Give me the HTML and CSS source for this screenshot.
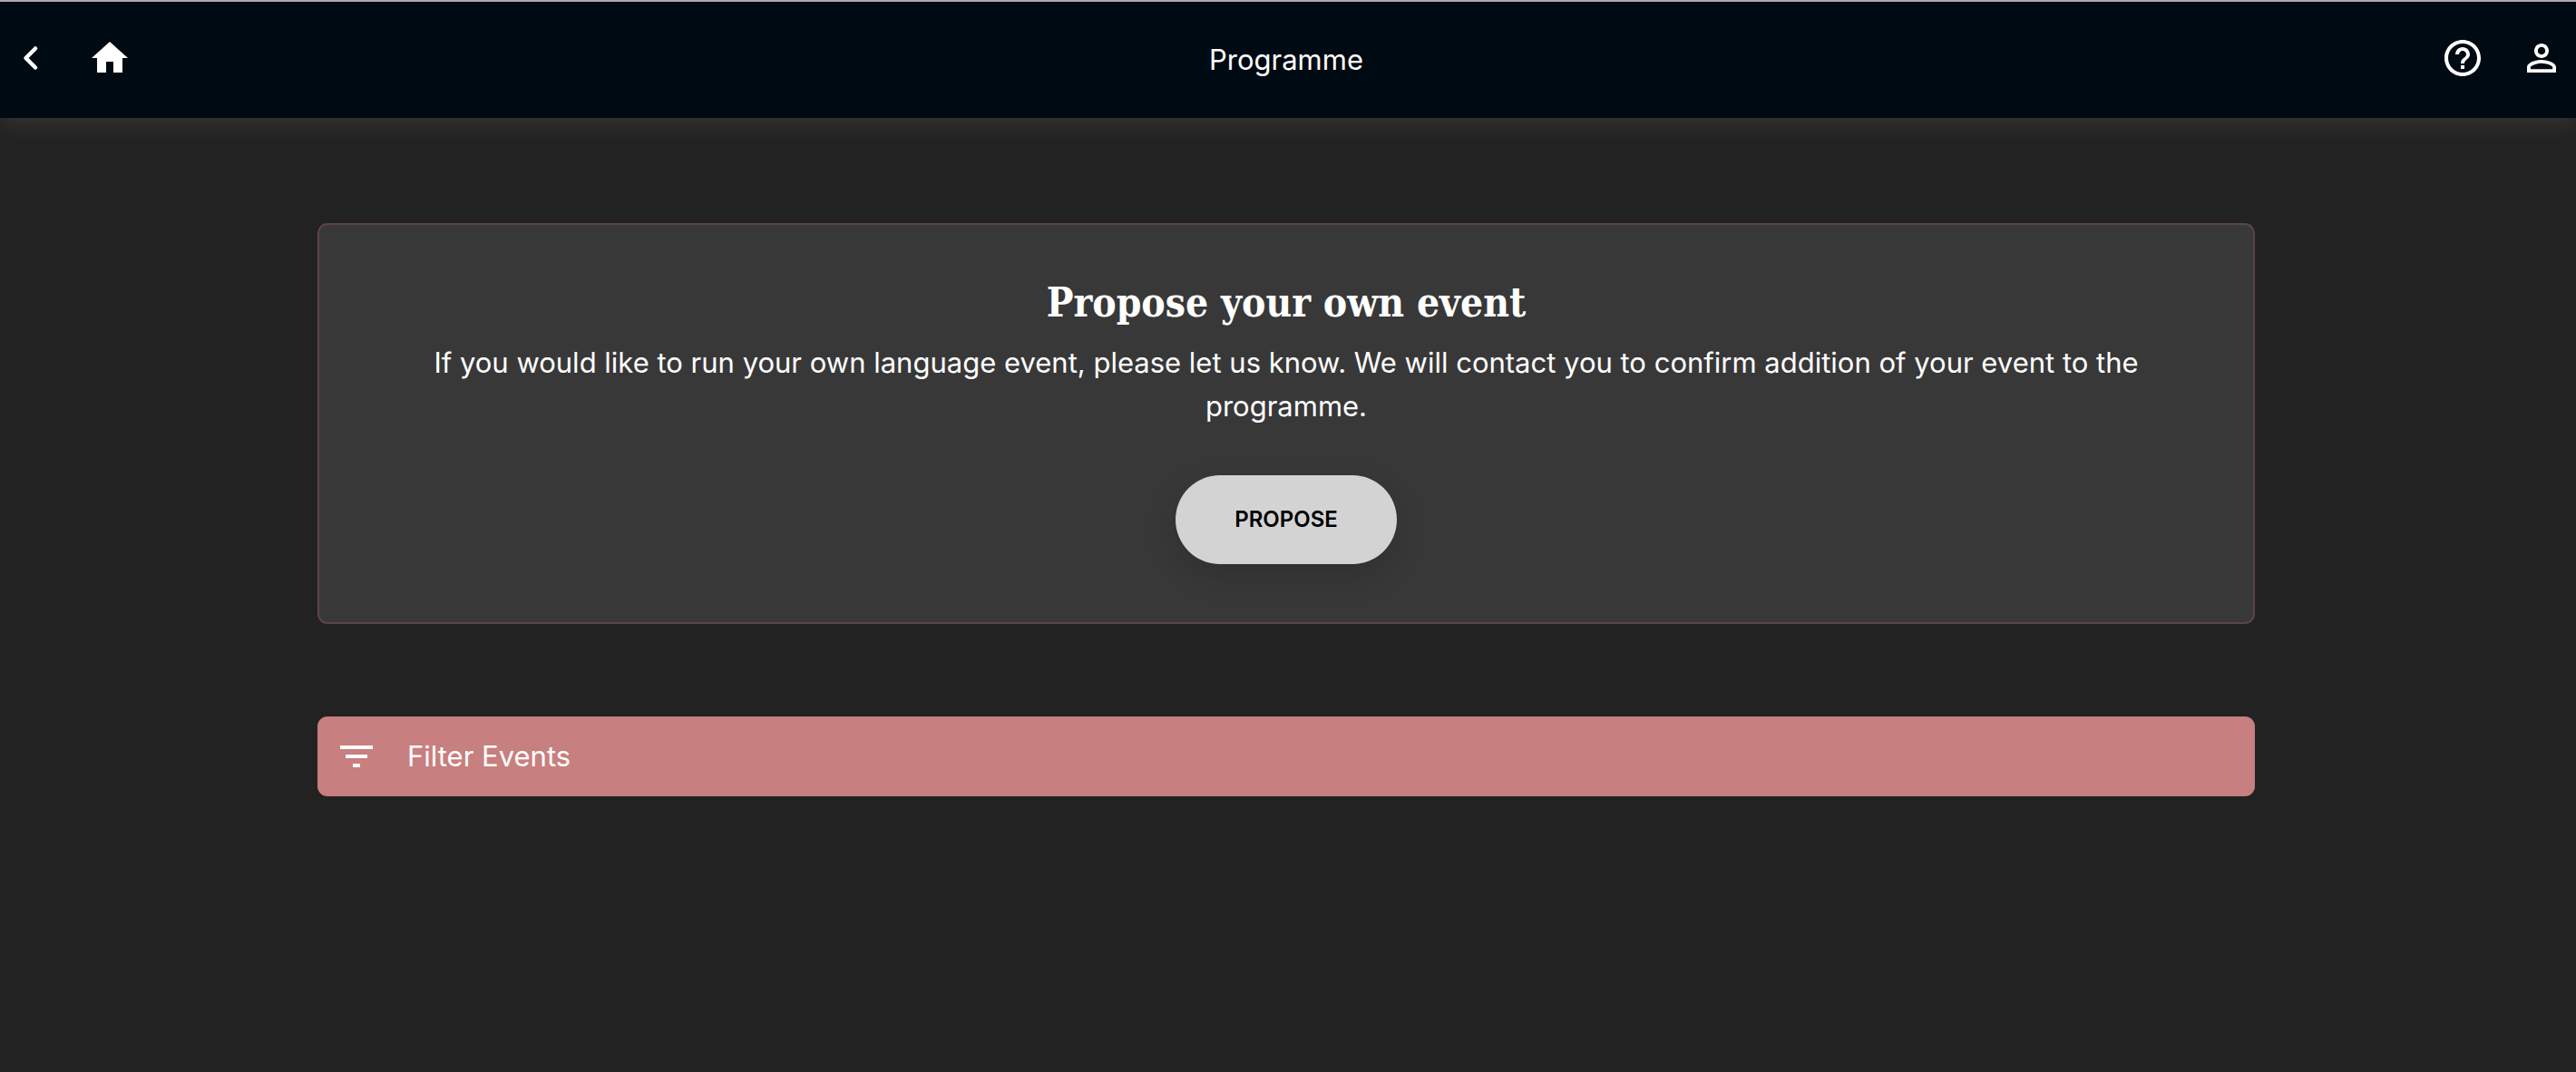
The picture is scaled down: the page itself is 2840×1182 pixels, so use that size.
FILE: index.html
```html
<!DOCTYPE html>
<html lang="en">
<head>
    <meta charset="utf-8">
    <meta name="viewport" content="width=device-width, initial-scale=1">
    <title>Programme</title>
    <link rel="stylesheet" href="styles.css">
</head>
<body>
    <!-- Top bar -->
    <header class="toolbar">
        <div class="toolbar-start">
            <button class="icon-button back-button" type="button" aria-label="Back">
                <svg class="icon icon-back" viewBox="0 0 24 48" aria-hidden="true">
                    <path d="M17 13.5 6.5 24 17 34.5" />
                </svg>
            </button>
            <a class="icon-button" href="#home" aria-label="Home">
                <svg class="icon" viewBox="0 0 24 24" aria-hidden="true">
                    <path d="M10 20v-6h4v6h5v-8h3L12 3 2 12h3v8z" />
                </svg>
            </a>
        </div>
        <h1 class="toolbar-title">Programme</h1>
        <div class="toolbar-end">
            <a class="icon-button" href="#help" aria-label="Help">
                <svg class="icon" viewBox="0 0 24 24" aria-hidden="true">
                    <path d="M11 18h2v-2h-2v2zm1-16C6.48 2 2 6.48 2 12s4.48 10 10 10 10-4.48 10-10S17.52 2 12 2zm0 18c-4.41 0-8-3.59-8-8s3.59-8 8-8 8 3.59 8 8-3.59 8-8 8zm0-14c-2.21 0-4 1.79-4 4h2c0-1.1.9-2 2-2s2 .9 2 2c0 2-3 1.75-3 5h2c0-2.25 3-2.5 3-5 0-2.21-1.79-4-4-4z" />
                </svg>
            </a>
            <a class="icon-button" href="#account" aria-label="Account">
                <svg class="icon" viewBox="0 0 24 24" aria-hidden="true">
                    <path d="M12 5.9c1.16 0 2.1.94 2.1 2.1s-.94 2.1-2.1 2.1S9.9 9.16 9.9 8s.94-2.1 2.1-2.1m0 9c2.97 0 6.1 1.46 6.1 2.1v1.1H5.9V17c0-.64 3.13-2.1 6.1-2.1M12 4C9.79 4 8 5.79 8 8s1.79 4 4 4 4-1.79 4-4-1.79-4-4-4zm0 9c-2.67 0-8 1.34-8 4v3h16v-3c0-2.66-5.33-4-8-4z" />
                </svg>
            </a>
        </div>
    </header>

    <main class="content">
        <section class="card">
            <h2 class="card-title">Propose your own event</h2>
            <p class="card-text">If you would like to run your own language event, please let us know. We will contact you to confirm addition of your event to the programme.</p>
            <button class="propose-button" type="button">PROPOSE</button>
        </section>

        <button class="filter-button" type="button">
            <svg class="icon" viewBox="0 0 24 24" aria-hidden="true">
                <path d="M10 18h4v-2h-4v2zM3 6v2h18V6H3zm3 7h12v-2H6v2z" />
            </svg>
            Filter Events
        </button>
    </main>
</body>
</html>
```

FILE: styles.css
```css
* {
    box-sizing: border-box;
}

body {
    margin: 0;
    min-height: 100vh;
    padding-right: 4px;
    background-color: #222;
    color: #fff;
    font-family: Inter, Roboto, sans-serif;
    font-size: 31px;
    line-height: 48px;
}

button {
    border: none;
    color: inherit;
    font: inherit;
    cursor: pointer;
}

/* Top bar */
.toolbar {
    display: grid;
    grid-template-columns: 1fr auto 1fr;
    align-items: center;
    height: 130px;
    margin-right: -4px;
    padding: 0 14px 0 10px;
    border-top: 2px solid #b3a3aa;
    background-color: #000a12;
    box-shadow: 0 4px 28px rgba(255, 255, 255, 0.1);
}

.toolbar-start,
.toolbar-end {
    display: flex;
    align-items: center;
}

.toolbar-start {
    gap: 51px;
    padding-left: 12px;
}

.toolbar-end {
    justify-content: flex-end;
    gap: 39px;
}

.toolbar-title {
    margin: 0;
    font-size: 31px;
    font-weight: 400;
}

.icon-button {
    display: flex;
    padding: 0 0 4px;
    background: none;
    color: #fff;
}

.icon {
    width: 48px;
    height: 48px;
    fill: currentColor;
}

.icon-back {
    width: 24px;
    fill: none;
    stroke: currentColor;
    stroke-width: 4.5;
    stroke-linecap: round;
    stroke-linejoin: round;
}

/* Page content */
.content {
    width: calc(75% + 9px);
    margin: 0 auto;
    padding: 116px 0;
}

.card {
    display: flex;
    flex-direction: column;
    align-items: center;
    margin-bottom: 102px;
    padding: 56px 120px 64px;
    border: 2px solid #5c434f;
    border-radius: 11px;
    background-color: #383838;
    text-align: center;
}

.card-title {
    margin: 0 0 12px;
    font-family: "DejaVu Serif Condensed", "DejaVu Serif", serif;
    font-size: 44px;
    font-weight: 700;
    line-height: 60px;
}

.card-text {
    margin: 0 0 52px;
}

.propose-button {
    height: 98px;
    padding: 0 65px;
    border-radius: 49px;
    background-color: #d3d3d3;
    color: #000;
    font-size: 24px;
    font-weight: 600;
    box-shadow: 0 12px 36px rgba(0, 0, 0, 0.14);
}

.filter-button {
    display: flex;
    align-items: center;
    gap: 32px;
    width: 100%;
    padding: 20px 19px;
    border-radius: 11px;
    background-color: #c87f7f;
    text-align: left;
}
```
